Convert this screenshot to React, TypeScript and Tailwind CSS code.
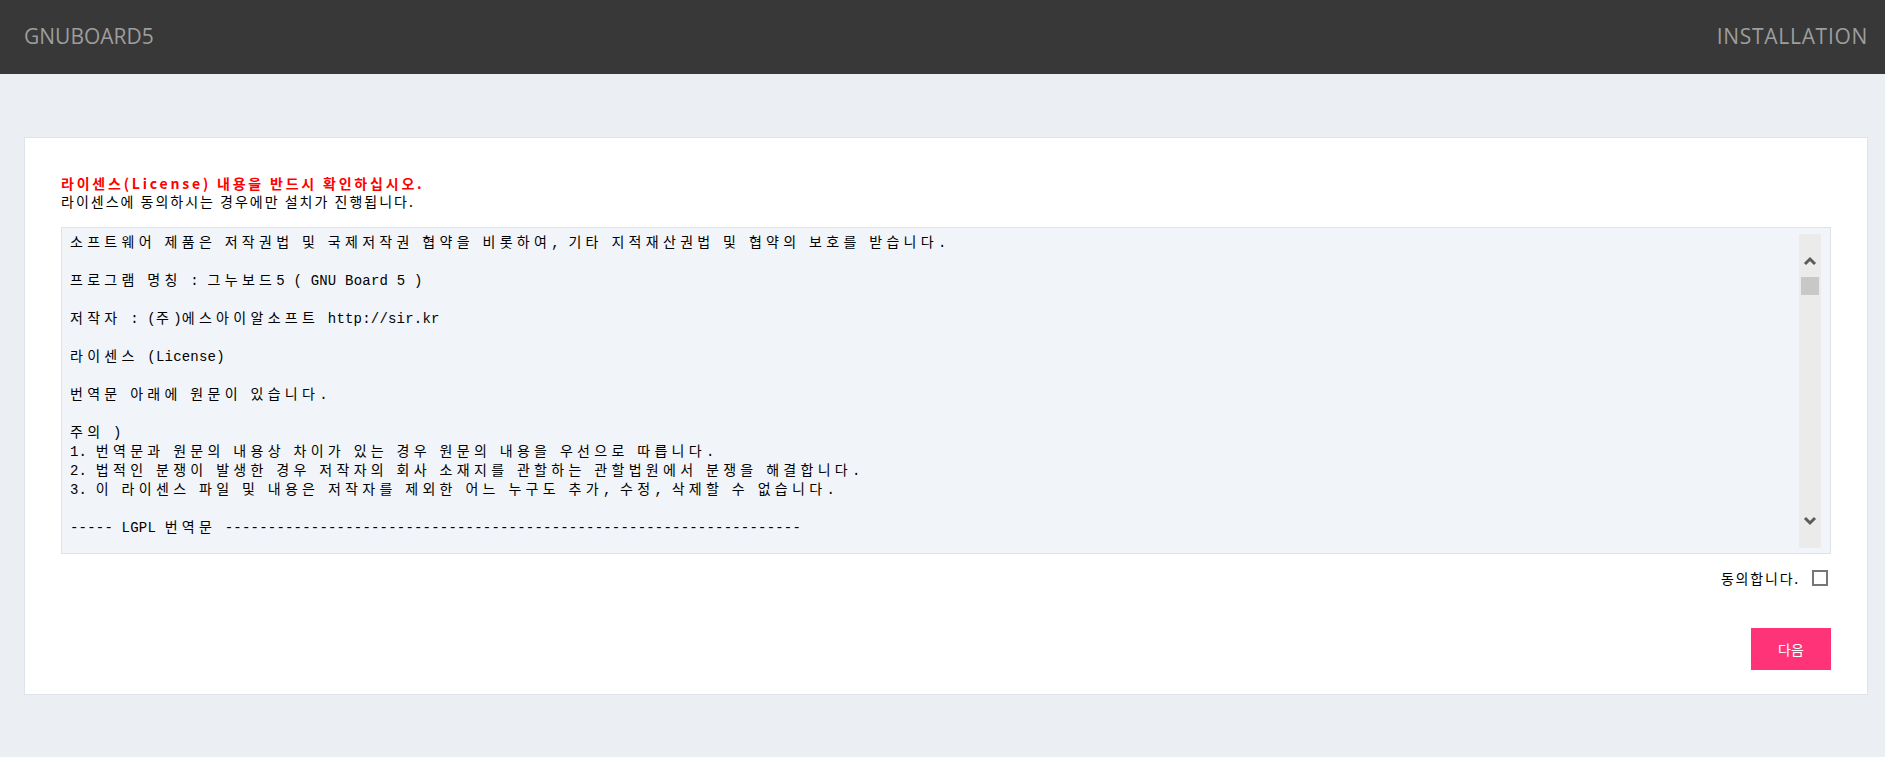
import React from "react";

const LICENSE_LINES = [
  "소프트웨어 제품은 저작권법 및 국제저작권 협약을 비롯하여, 기타 지적재산권법 및 협약의 보호를 받습니다.",
  "",
  "프로그램 명칭 : 그누보드5 ( GNU Board 5 )",
  "",
  "저작자 : (주)에스아이알소프트 http://sir.kr",
  "",
  "라이센스 (License)",
  "",
  "번역문 아래에 원문이 있습니다.",
  "",
  "주의 )",
  "1. 번역문과 원문의 내용상 차이가 있는 경우 원문의 내용을 우선으로 따릅니다.",
  "2. 법적인 분쟁이 발생한 경우 저작자의 회사 소재지를 관할하는 관할법원에서 분쟁을 해결합니다.",
  "3. 이 라이센스 파일 및 내용은 저작자를 제외한 어느 누구도 추가, 수정, 삭제할 수 없습니다.",
  "",
  "----- LGPL 번역문 -------------------------------------------------------------------",
];

// 한글은 전각, 나머지는 반각처럼 보이도록 나눠서 그린다
function LicenseLine({ text }: { text: string }) {
  if (!text) return <div className="h-[19px]" />;
  const parts = text.split(/([\uAC00-\uD7A3\u3131-\u318E]+)/);
  return (
    <div className="h-[19px] whitespace-pre">
      {parts.map((part, i) =>
        /[\uAC00-\uD7A3\u3131-\u318E]/.test(part) ? (
          <span
            key={i}
            className="font-['Noto_Sans_CJK_KR',sans-serif] text-[14px] tracking-[4.3px]"
          >
            {part}
          </span>
        ) : (
          <span key={i}>{part}</span>
        )
      )}
    </div>
  );
}

function Chevron({ up }: { up?: boolean }) {
  return (
    <svg width="14" height="12" viewBox="0 0 14 12" className="shrink-0">
      <polyline
        points={up ? "2,9 7,4 12,9" : "2,3 7,8 12,3"}
        fill="none"
        stroke="#5c5c5c"
        strokeWidth="3"
      />
    </svg>
  );
}

export default function App() {
  return (
    <div className="min-h-screen bg-[#ebeef3] font-['Noto_Sans_CJK_KR',sans-serif]">
      <header className="flex h-[74px] items-center justify-between bg-[#383838] pl-[24px] pr-[17px] font-['Open_Sans','Noto_Sans',sans-serif] text-[21px] text-[#9d9d9d]">
        <span>GNUBOARD5</span>
        <span className="tracking-[0.7px]">INSTALLATION</span>
      </header>

      <main className="pl-[24px] pr-[17px] pt-[63px] pb-[61px]">
        <section className="border border-[#dfe4ea] bg-white px-[36px] pt-[36px] pb-[24px]">
          <p className="text-[14px] leading-[18px] font-bold tracking-[2.8px] text-[#ff0000]">
            라이센스(License) 내용을 반드시 확인하십시오.
          </p>
          <p className="text-[14px] leading-[18px] tracking-[2px] text-black">
            라이센스에 동의하시는 경우에만 설치가 진행됩니다.
          </p>

          <div className="mt-[17px] flex h-[327px] border border-[#dde3ea] bg-[#f1f4f9] pt-[4px] pb-[5px] pl-[8px] pr-[9px]">
            <div className="flex-1 overflow-hidden font-['Liberation_Mono',monospace] text-[14px] leading-[19px] tracking-[0.2px] text-black">
              {LICENSE_LINES.map((line, i) => (
                <LicenseLine key={i} text={line} />
              ))}
            </div>
            <div className="mt-[2px] flex w-[22px] flex-col items-center bg-[#ebebeb] pt-[21px] pb-[21px]">
              <Chevron up />
              <div className="mt-[10px] h-[18px] w-[18px] bg-[#c8c8c8]" />
              <div className="flex-1" />
              <Chevron />
            </div>
          </div>

          <div className="mt-[15px] flex h-[18px] items-center justify-end gap-[12px] pr-[3px]">
            <label htmlFor="agree" className="text-[14px] tracking-[1.8px] text-black">
              동의합니다.
            </label>
            <input
              id="agree"
              type="checkbox"
              className="h-[16px] w-[16px] appearance-none border-2 border-[#767676] bg-white"
            />
          </div>

          <div className="mt-[41px] flex justify-end">
            <button className="h-[42px] w-[80px] bg-[#ff3378] text-[14px] text-white">
              다음
            </button>
          </div>
        </section>
      </main>
    </div>
  );
}
